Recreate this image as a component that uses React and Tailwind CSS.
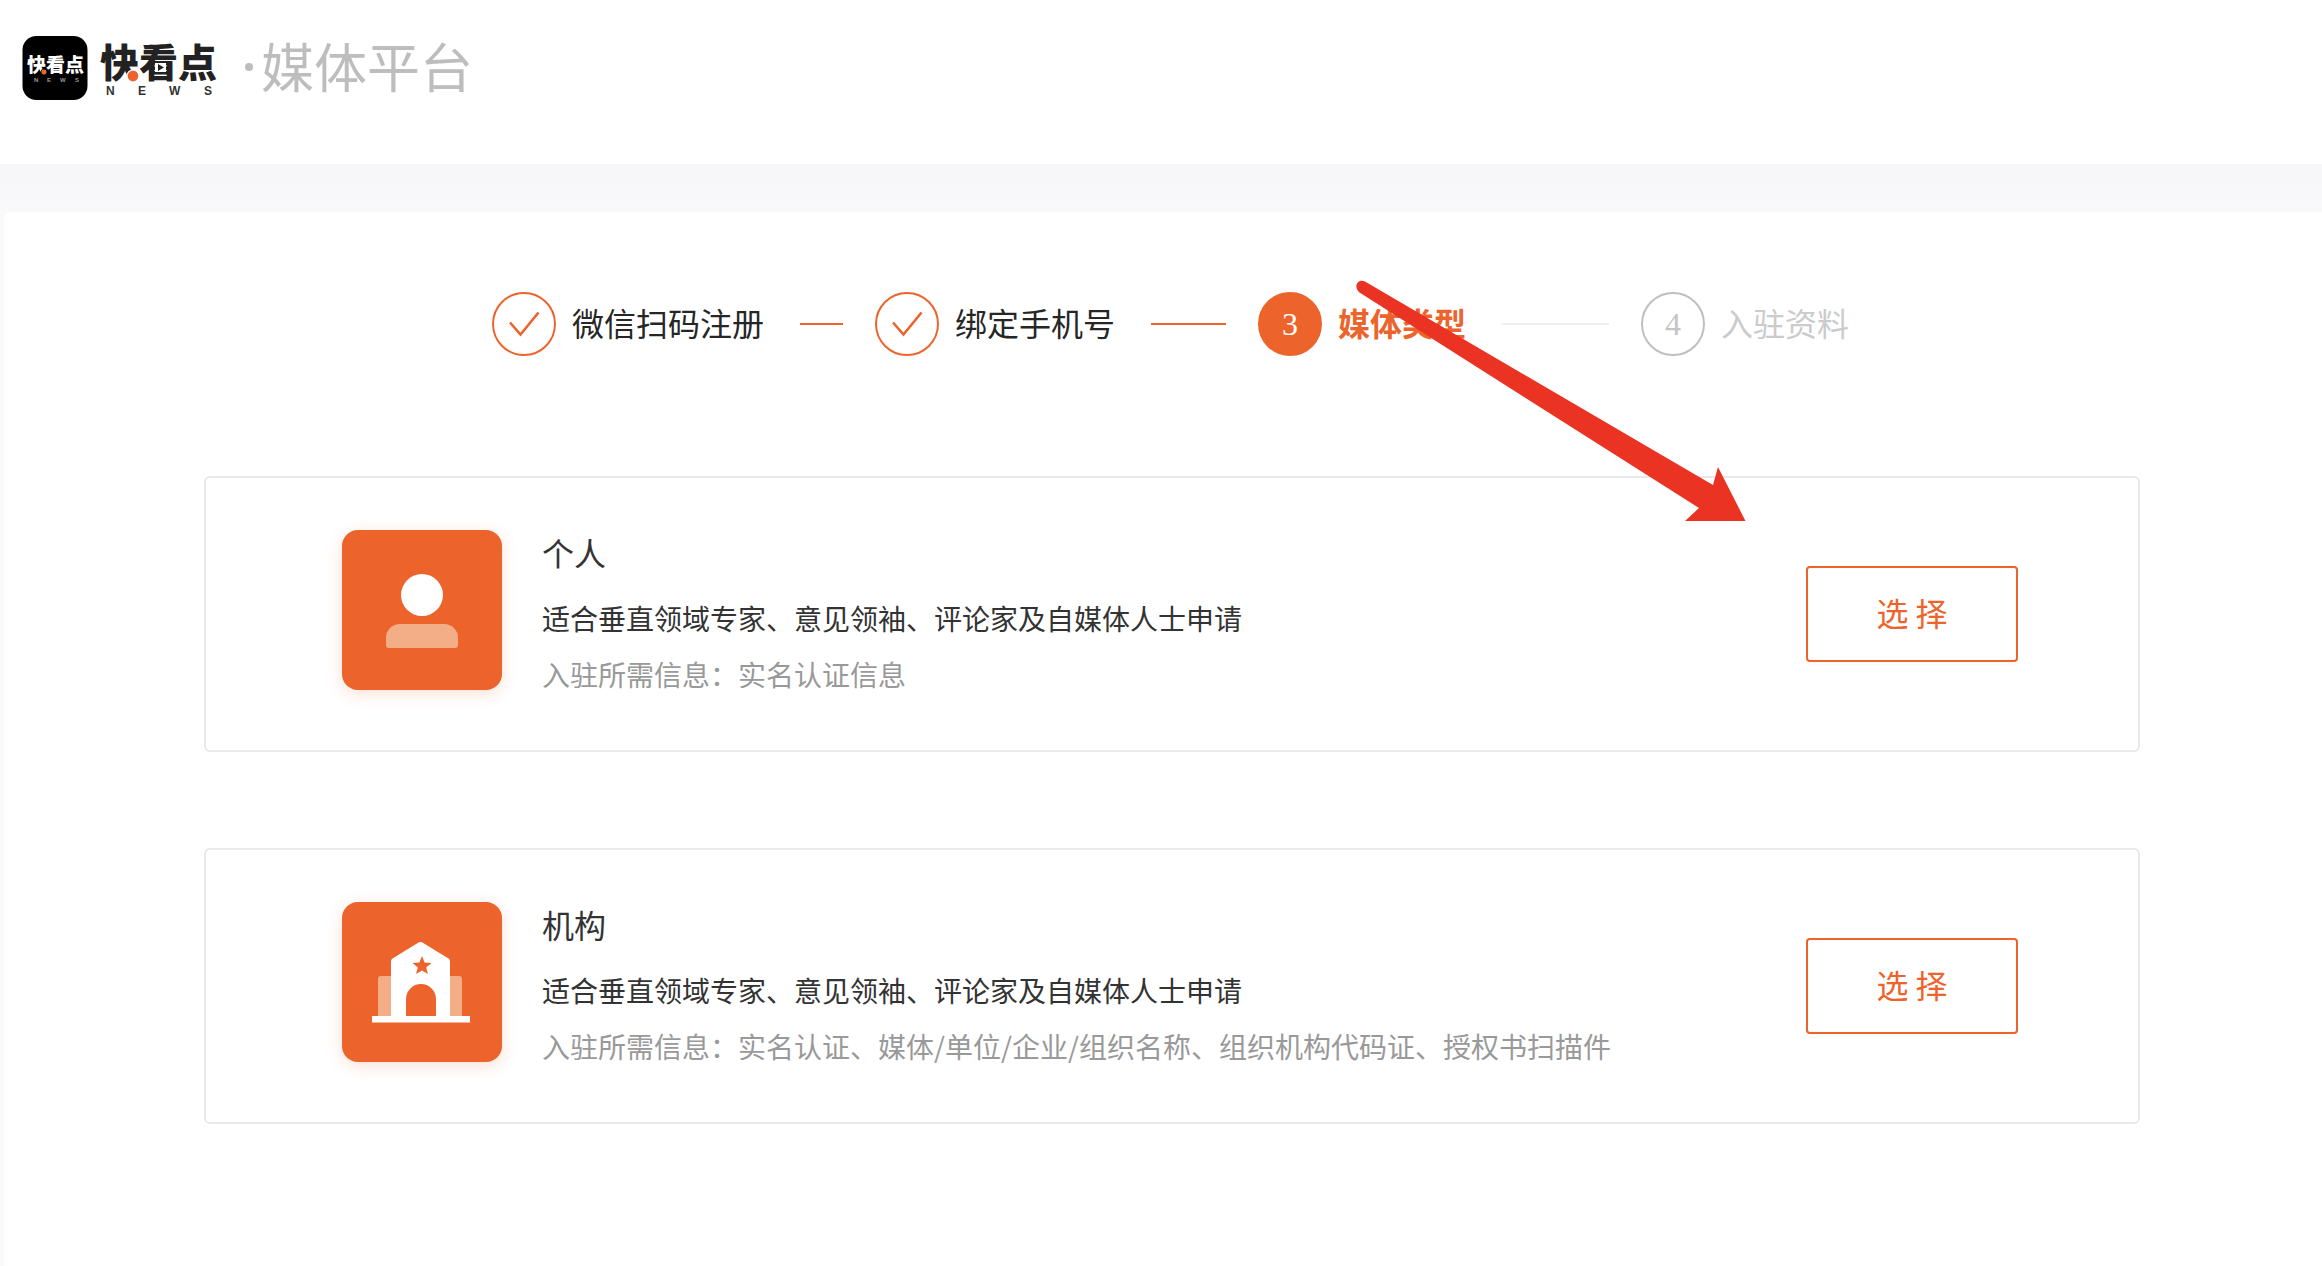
const STEPS = [
  { title: '微信扫码注册', state: 'done' },
  { title: '绑定手机号', state: 'done' },
  { title: '媒体类型', state: 'current' },
  { title: '入驻资料', state: 'waiting' },
];

const CIRCLE = {
  done: 'border-[#ec642b] text-[#ec642b]',
  current: 'border-[#ec642b] bg-[#ec642b] text-white',
  waiting: 'border-[#bfbfbf] text-[#c4c4c4]',
};

const TITLE = {
  done: 'text-[#262626]',
  current: 'font-bold text-[#ec642b]',
  waiting: 'text-[#cbcbcb]',
};

const LINE = {
  done: 'bg-[#ec642b]',
  current: 'bg-[#efefef]',
};

function Logo() {
  return (
    <svg width="196" height="86" viewBox="0 -10 196 86" role="img" aria-label="快看点 NEWS">
      <rect x="1.500" y="1" width="65" height="64" rx="14" fill="#000" />
      <g fontFamily="'Noto Sans CJK SC', sans-serif" fontWeight="900">
        <text x="6" y="37" fontSize="19" fill="#fff">快看点</text>
        <text x="79" y="42" fontSize="39" fill="#222">快看点</text>
      </g>
      <g fontFamily="'Liberation Sans', sans-serif" fontWeight="700">
        <text x="13 26 39 54" y="47" fontSize="6" fill="#999">NEWS</text>
        <text x="85 117 148 183" y="60" fontSize="12" fill="#333">NEWS</text>
      </g>
      <circle cx="23" cy="37" r="3" fill="#ec642b" stroke="#000" strokeWidth="0.8" />
      <circle cx="112" cy="41" r="6" fill="#ec642b" stroke="#fff" strokeWidth="1.200" />
      <rect x="134" y="28" width="11" height="9" fill="#fff" />
      <path d="M137 29l6 3.500-6 3.500z" fill="#222" />
    </svg>
  );
}

function Check() {
  return (
    <svg width="60" height="60" viewBox="2 2 60 60" fill="none" stroke="currentColor" strokeWidth="2.6" aria-hidden="true">
      <path d="M18 30.500 L28.500 42.500 L46.500 20.500" />
    </svg>
  );
}

function PersonIcon() {
  return (
    <svg width="160" height="160" viewBox="0 0 160 160" aria-hidden="true">
      <circle cx="80" cy="65" r="21" fill="#fff" />
      <path d="M44 108a14 14 0 0 1 14-14h44a14 14 0 0 1 14 14v7a3 3 0 0 1-3 3H47a3 3 0 0 1-3-3z" fill="#f3ae87" />
    </svg>
  );
}

function BuildingIcon() {
  return (
    <svg width="160" height="160" viewBox="0 0 160 160" aria-hidden="true">
      <path d="M36 114V77a3 3 0 0 1 3-3h78a3 3 0 0 1 3 3v37z" fill="#f3ae87" />
      <path d="M49 114V59q0-1.500 1.500-2.500L77 40.300q1.500-.8 3 0L106.500 56.500Q108 57.500 108 59v55z" fill="#fff" />
      <rect x="30" y="114" width="98" height="6.500" fill="#fff" />
      <path d="M64 114V97a15 15 0 0 1 30 0v17z" fill="#ec642b" />
      <path d="M80 54l2.600 6.400 6.900.5-5.300 4.500 1.700 6.700L80 68.500l-5.900 3.600 1.700-6.700-5.300-4.500 6.900-.5z" fill="#ec642b" />
    </svg>
  );
}

function Steps() {
  return (
    <ol className="mr-[291px] ml-[288px] flex items-center">
      {STEPS.map((step, i) => (
        <li
          key={step.title}
          aria-current={step.state === 'current' ? 'step' : undefined}
          className={i < STEPS.length - 1 ? 'flex flex-1 items-center' : 'flex items-center'}
        >
          <span
            className={`mr-4 flex size-16 shrink-0 items-center justify-center rounded-full border-2 font-['Liberation_Serif',serif] text-[32px] leading-[60px] ${CIRCLE[step.state]}`}
          >
            {step.state === 'done' ? <Check /> : i + 1}
          </span>
          <span className={`pb-1 text-[32px] leading-15 whitespace-nowrap ${TITLE[step.state]}`}>{step.title}</span>
          {i < STEPS.length - 1 && <span className={`mr-8 ml-9 h-0.5 flex-1 ${LINE[step.state]}`} />}
        </li>
      ))}
    </ol>
  );
}

function TypeCard({ icon, title, description, required }) {
  return (
    <section className="flex items-center rounded-md border-2 border-[#e9e9e9] pt-[52px] pr-[120px] pb-12 pl-[136px]">
      <div className="size-40 shrink-0 self-start rounded-2xl bg-[#ec642b] shadow-[0_4px_16px_rgba(236,100,43,0.2)]">{icon}</div>
      <div className="ml-10 flex-1">
        <h2 className="mb-4 text-[32px] leading-11 text-[#333]">{title}</h2>
        <p className="text-[28px] leading-14 text-[#333]">{description}</p>
        <p className="text-[28px] leading-14 text-[#999]">{required}</p>
      </div>
      <button
        type="button"
        className="mb-1 h-24 w-[212px] shrink-0 rounded border-2 border-[#ec642b] bg-white pb-1 text-[32px] text-[#ec642b] shadow-[0_4px_0_rgba(0,0,0,0.015)]"
      >
        选 择
      </button>
    </section>
  );
}

export default function App() {
  return (
    <div className="relative flex min-h-screen flex-col bg-[#f9f9fb] font-['Noto_Sans_CJK_SC',sans-serif]">
      <header className="flex h-[164px] items-start bg-white pt-[25px] pl-[21px]">
        <Logo />
        <h1 className="mt-2.5 ml-7 flex items-center text-[53px] text-[#bdbdbd]">
          <span className="mr-2 size-2 rounded-full bg-[#bdbdbd]" />
          <span className="pb-1 leading-15">媒体平台</span>
        </h1>
      </header>
      <div className="h-12 bg-linear-to-b from-[#f6f6f8] to-[#f9f9fb]" />
      <main className="ml-1 flex flex-1 flex-col rounded-tl-md bg-white pt-20 pr-[182px] pb-[142px] pl-[200px]">
        <Steps />
        <div className="mt-[120px] flex flex-col gap-24">
          <TypeCard
            icon={<PersonIcon />}
            title="个人"
            description="适合垂直领域专家、意见领袖、评论家及自媒体人士申请"
            required="入驻所需信息：实名认证信息"
          />
          <TypeCard
            icon={<BuildingIcon />}
            title="机构"
            description="适合垂直领域专家、意见领袖、评论家及自媒体人士申请"
            required="入驻所需信息：实名认证、媒体/单位/企业/组织名称、组织机构代码证、授权书扫描件"
          />
        </div>
      </main>
      <svg
        className="pointer-events-none absolute top-[270px] left-[1350px]"
        width="400"
        height="260"
        viewBox="1350 270 400 260"
        aria-hidden="true"
      >
        <path d="M1365 281.500L1713 485L1718 467L1745.500 521H1685L1699 508L1359.500 292.500C1353 287 1357.500 278 1365 281.500z" fill="#ea3323" />
      </svg>
    </div>
  );
}
